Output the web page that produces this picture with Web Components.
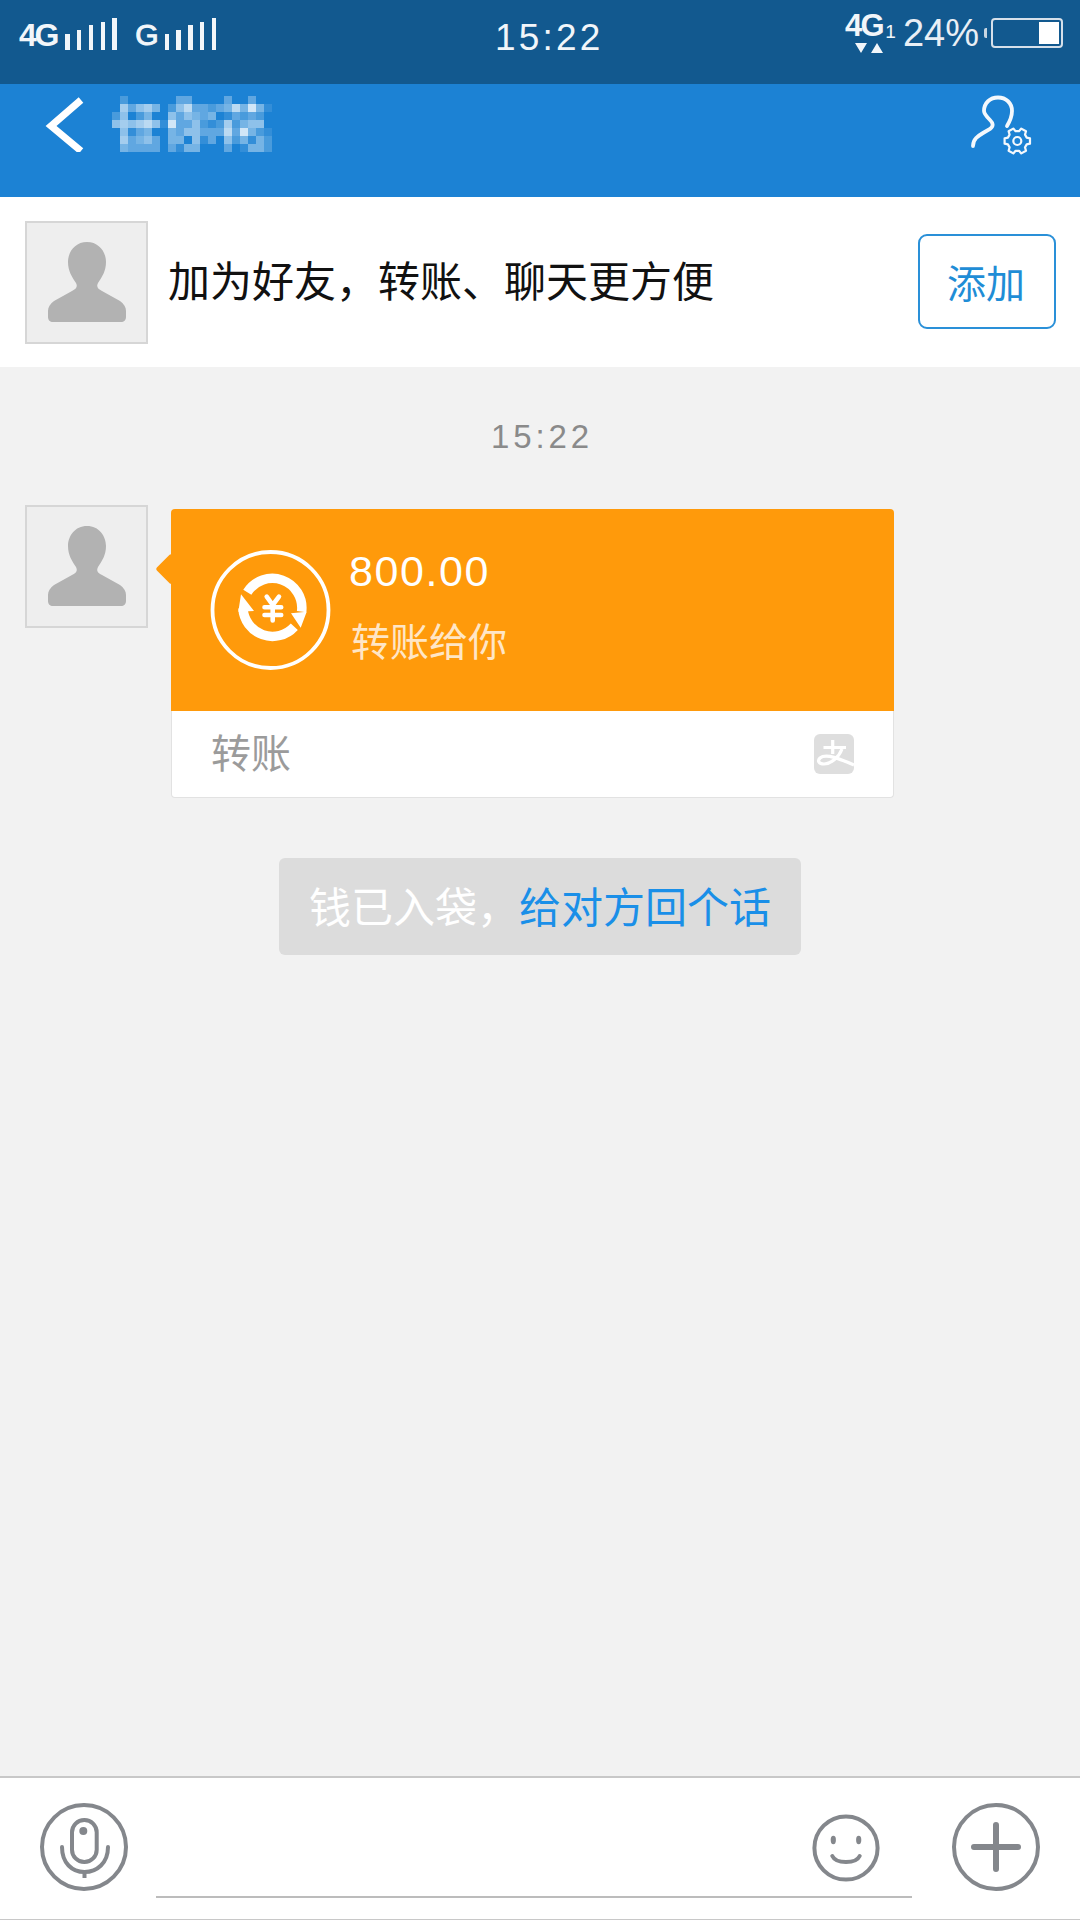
<!DOCTYPE html>
<html lang="zh-CN">
<head>
<meta charset="utf-8">
<title>转账</title>
<style>
    html, body { margin: 0; padding: 0; }
    body {
        width: 1080px;
        height: 1920px;
        display: flex;
        flex-direction: column;
        overflow: hidden;
        background: #f2f2f2;
        font-family: "Liberation Sans", "Noto Sans CJK SC", sans-serif;
    }
</style>
</head>
<body>
<status-bar></status-bar>
<nav-bar></nav-bar>
<friend-bar>加为好友，转账、聊天更方便</friend-bar>
<chat-view>
    <chat-time>15:22</chat-time>
    <chat-message>
        <transfer-card amount="800.00" note="转账给你" kind="转账"></transfer-card>
    </chat-message>
    <chat-hint>钱已入袋，<span slot="action">给对方回个话</span></chat-hint>
</chat-view>
<input-bar></input-bar>

<script>
class SignalBars extends HTMLElement {
    constructor() {
        super();
        this.attachShadow({ mode: 'open' }).innerHTML = `
            <style>
                :host { display: inline-flex; align-items: flex-end; gap: 7.5px; height: 32px; }
                span { display: block; width: 4.3px; background: #f2f6fa; }
            </style>
            <span style="height:16px"></span>
            <span style="height:20px"></span>
            <span style="height:25px"></span>
            <span style="height:28px"></span>
            <span style="height:32px"></span>
        `;
    }
}

class StatusBar extends HTMLElement {
    constructor() {
        super();
        this.attachShadow({ mode: 'open' }).innerHTML = `
            <style>
                :host {
                    display: grid;
                    grid-template-columns: 476px auto 1fr;
                    flex: none;
                    height: 84px;
                    box-sizing: border-box;
                    padding-left: 19px;
                    background: #12598f;
                    color: #f2f6fa;
                }
                .signal { display: flex; align-items: flex-end; height: 50px; }
                .net {
                    font-weight: bold;
                    font-size: 32px;
                    line-height: 30px;
                    letter-spacing: -2.2px;
                    margin-right: 8px;
                }
                .net.g { margin: 0 6px 0 18.5px; letter-spacing: 0; font-size: 30px; font-weight: normal; -webkit-text-stroke: 1px #f2f6fa; }
                .clock { font-size: 37px; line-height: 37px; letter-spacing: 3.2px; margin-top: 19px; }
                .right { display: flex; justify-content: flex-end; padding-right: 17px; }
                .net4g { position: relative; width: 40px; margin-right: 18px; height: 60px; }
                .net4g b { display: block; font-size: 31px; line-height: 24px; letter-spacing: -1.6px; margin-top: 14px; }
                .net4g i { position: absolute; right: -11px; top: 24px; font-style: normal; font-size: 19px; line-height: 15px; }
                .net4g svg { display: block; margin: 5px 0 0 10px; }
                .pct { font-size: 38px; line-height: 37px; margin-top: 15px; color: #e9eff5; }
                .nub { width: 3px; height: 10px; margin: 28px 4px 0 5px; background: #c8d6e2; border-radius: 2px 0 0 2px; }
                .battery {
                    width: 72px;
                    height: 30px;
                    margin-top: 18px;
                    box-sizing: border-box;
                    border: 2px solid #d6e0ea;
                    border-radius: 4px;
                    padding: 2px;
                    display: flex;
                    justify-content: flex-end;
                }
                .battery span { display: block; width: 20px; background: #fff; }
            </style>
            <div class="signal">
                <span class="net">4G</span><signal-bars></signal-bars>
                <span class="net g">G</span><signal-bars></signal-bars>
            </div>
            <div class="clock">15:22</div>
            <div class="right">
                <div class="net4g">
                    <b>4G</b><i>1</i>
                    <svg width="28" height="10" viewBox="0 0 28 10"><path d="M0 0H12L6 10ZM22 0L28 10H16Z" fill="#f2f6fa"/></svg>
                </div>
                <div class="pct">24%</div>
                <div class="nub"></div>
                <div class="battery"><span></span></div>
            </div>
        `;
    }
}

class PixelName extends HTMLElement {
    constructor() {
        super();
        // mosaic over the contact name, one digit = one 8px cell
        const rows = [
            '02000000330000300300',
            '06356402573323474841',
            '25024005354340132320',
            '56567518335212624550',
            '05134004355333738421',
            '06345304405130524142',
            '04333303144000301442'
        ];
        const cells = rows.map((row, y) => row.split('').map((v, x) =>
            `<rect x="${x * 8}" y="${y * 8}" width="8" height="8" fill="#fff" opacity="${v / 10}"/>`
        ).join('')).join('');
        this.attachShadow({ mode: 'open' }).innerHTML = `
            <style>
                :host { display: block; width: 160px; height: 56px; }
                svg { display: block; shape-rendering: crispEdges; }
            </style>
            <svg width="160" height="56" viewBox="0 0 160 56">${cells}</svg>
        `;
    }
}

class NavBar extends HTMLElement {
    constructor() {
        super();
        this.attachShadow({ mode: 'open' }).innerHTML = `
            <style>
                :host {
                    display: flex;
                    flex: none;
                    align-items: flex-start;
                    height: 113px;
                    box-sizing: border-box;
                    padding: 8px 45px 0 44px;
                    background: #1c82d4;
                }
                .back { display: block; margin: 4px 28px 0 0; }
                pixel-name { margin-top: 4px; }
                .profile { display: block; margin-left: auto; }
            </style>
            <svg class="back" width="40" height="56" viewBox="0 0 40 56">
                <path d="M37 4L7 30L37 55" fill="none" stroke="#fff" stroke-width="7"/>
            </svg>
            <pixel-name></pixel-name>
            <svg class="profile" width="65" height="66" viewBox="0 0 65 66" fill="none" stroke="#f4f8fc">
                <path stroke-width="3.8" stroke-linecap="round" d="M3 54C3 47 8 44 13 41L20 37C24 34 23 31 20 28C16 24 14 21 14 19C14 11 20 5.5 28 5.5C36 5.5 42 11 42 19C42 25 40 29 37 34"/>
                <path stroke-width="2.2" stroke-linejoin="round" d="${this.gearPath(47.3, 49)}"/>
                <circle cx="47.3" cy="49" r="4" stroke-width="2.2"/>
            </svg>
        `;
    }

    gearPath(cx, cy) {
        const pts = [];
        for (let i = 0; i < 6; i++) {
            const a = i * 60;
            [[a - 12, 13], [a + 12, 13], [a + 20, 10], [a + 40, 10]].forEach(([deg, r]) => {
                const rad = deg * Math.PI / 180;
                pts.push((cx + r * Math.cos(rad)).toFixed(1) + ' ' + (cy + r * Math.sin(rad)).toFixed(1));
            });
        }
        return 'M' + pts.join('L') + 'Z';
    }
}

class UserAvatar extends HTMLElement {
    constructor() {
        super();
        this.attachShadow({ mode: 'open' }).innerHTML = `
            <style>
                :host {
                    display: block;
                    flex: none;
                    width: 123px;
                    height: 123px;
                    box-sizing: border-box;
                    border: 2px solid #d6d6d6;
                    background: #eeeeee;
                }
                svg { display: block; margin: -2px; }
            </style>
            <svg width="123" height="123" viewBox="0 0 123 123">
                <path fill="#b2b2b2" d="M62 21C74 21 81 31 81 41C81 50 77 56 73 62C71 66 73 68 77 70L95 80C99 83 101 86 101 90L101 96C101 99 99 101 96 101L28 101C25 101 23 99 23 96L23 90C23 86 25 83 29 80L47 70C51 68 53 66 51 62C47 56 43 50 43 41C43 31 50 21 62 21Z"/>
            </svg>
        `;
    }
}

class FriendBar extends HTMLElement {
    constructor() {
        super();
        this.attachShadow({ mode: 'open' }).innerHTML = `
            <style>
                :host {
                    display: flex;
                    flex: none;
                    align-items: center;
                    height: 170px;
                    box-sizing: border-box;
                    padding: 0 24px 0 25px;
                    background: #fff;
                }
                user-avatar { margin-top: 1px; }
                .text { flex: 1; margin-left: 20px; font-size: 42px; line-height: 60px; color: #111; margin-top: 1px; }
                button {
                    width: 138px;
                    height: 95px;
                    margin-top: -2px;
                    box-sizing: border-box;
                    border: 2px solid #2a90d8;
                    border-radius: 9px;
                    background: #fff;
                    color: #1f8dd6;
                    font: inherit;
                    font-size: 39px;
                    padding: 0 2px 0 0;
                }
            </style>
            <user-avatar></user-avatar>
            <div class="text"><slot></slot></div>
            <button>添加</button>
        `;
    }
}

class ChatView extends HTMLElement {
    constructor() {
        super();
        this.attachShadow({ mode: 'open' }).innerHTML = `
            <style>
                :host {
                    display: flex;
                    flex: 1;
                    flex-direction: column;
                    box-sizing: border-box;
                    padding-top: 50px;
                    background: #f2f2f2;
                }
            </style>
            <slot></slot>
        `;
    }
}

class ChatTime extends HTMLElement {
    constructor() {
        super();
        this.attachShadow({ mode: 'open' }).innerHTML = `
            <style>
                :host {
                    display: block;
                    height: 40px;
                    padding-left: 4px;
                    text-align: center;
                    font-size: 33px;
                    line-height: 40px;
                    letter-spacing: 3.9px;
                    color: #8a8a8a;
                }
            </style>
            <slot></slot>
        `;
    }
}

class ChatMessage extends HTMLElement {
    constructor() {
        super();
        this.attachShadow({ mode: 'open' }).innerHTML = `
            <style>
                :host { display: flex; gap: 23px; margin-top: 48px; padding-left: 25px; }
                .bubble { margin-top: 4px; }
            </style>
            <user-avatar></user-avatar>
            <div class="bubble"><slot></slot></div>
        `;
    }
}

class TransferCard extends HTMLElement {
    constructor() {
        super();
        this.attachShadow({ mode: 'open' }).innerHTML = `
            <style>
                :host { display: block; position: relative; width: 723px; }
                :host::before {
                    content: "";
                    position: absolute;
                    left: -11px;
                    top: 49px;
                    width: 22px;
                    height: 22px;
                    background: #ff9a0b;
                    border-radius: 2px;
                    transform: rotate(45deg);
                }
                .top {
                    position: relative;
                    display: flex;
                    height: 202px;
                    box-sizing: border-box;
                    padding: 39px 0 0 38px;
                    background: #ff9a0b;
                    border-radius: 4px 4px 0 0;
                }
                .top svg { display: block; flex: none; }
                .info { margin-left: 16px; }
                .amount { font-size: 43px; line-height: 50px; letter-spacing: 1.6px; color: #fff; margin-top: -2px; }
                .note { font-size: 39px; line-height: 50px; color: #ffe6c6; margin: 22px 0 0 2px; }
                .bottom {
                    display: flex;
                    align-items: center;
                    justify-content: space-between;
                    height: 87px;
                    box-sizing: border-box;
                    padding: 0 39px 0 39px;
                    background: #fff;
                    border: 1px solid #e2e2e2;
                    border-top: 0;
                    border-radius: 0 0 4px 4px;
                    color: #9b9b9b;
                    font-size: 40px;
                }
                .bottom span { margin-top: -6px; }
                .bottom svg { display: block; margin-top: 0; }
            </style>
            <div class="top">
                <svg width="124" height="124" viewBox="0 0 124 124" fill="none" stroke="#fff">
                    <circle cx="61.5" cy="62" r="58" stroke-width="3.8"/>
                    <path stroke-width="9.5" d="M38.3 44.3A29.5 29.5 0 0 1 92.6 63.7"/>
                    <path stroke-width="9.5" d="M85.3 78.7A29.5 29.5 0 0 1 34 60.3"/>
                    <path fill="#fff" stroke="none" d="M91.7 79.7L82 65.3L97.7 63.7ZM32 46.3L29.3 63.7L45 63Z"/>
                    <path stroke-width="4.6" stroke-linecap="round" stroke-linejoin="round" d="M57.7 48.7L63.7 57L70 48.7M55.5 59.3H72.2M55.5 67H72.2M63.7 57V72.5"/>
                </svg>
                <div class="info">
                    <div class="amount">${this.getAttribute('amount')}</div>
                    <div class="note">${this.getAttribute('note')}</div>
                </div>
            </div>
            <div class="bottom">
                <span>${this.getAttribute('kind')}</span>
                <svg width="40" height="40" viewBox="0 0 40 40">
                    <rect width="40" height="40" rx="6" fill="#dedede"/>
                    <path fill="none" stroke="#fff" stroke-width="3.2" d="M18.7 6V20M9.5 13.5H32M28 15C25 23 17 30 10 30C5 30 3 27 6 24C12 19 26 25 40 31"/>
                </svg>
            </div>
        `;
    }
}

class ChatHint extends HTMLElement {
    constructor() {
        super();
        this.attachShadow({ mode: 'open' }).innerHTML = `
            <style>
                :host { display: flex; justify-content: center; margin-top: 60px; }
                .pill {
                    display: flex;
                    align-items: center;
                    height: 97px;
                    box-sizing: border-box;
                    padding: 0 30px 4px;
                    background: #dcdcdc;
                    border-radius: 6px;
                    color: #fff;
                    font-size: 42px;
                }
                .action { color: #1a8fe8; }
            </style>
            <div class="pill"><slot></slot><span class="action"><slot name="action"></slot></span></div>
        `;
    }
}

class InputBar extends HTMLElement {
    constructor() {
        super();
        this.attachShadow({ mode: 'open' }).innerHTML = `
            <style>
                :host {
                    display: flex;
                    flex: none;
                    align-items: center;
                    height: 144px;
                    box-sizing: border-box;
                    padding: 0 38px;
                    background: #fff;
                    border-top: 2px solid #c8c8c8;
                    border-bottom: 1px solid #c8c8c8;
                }
                svg { display: block; flex: none; }
                .round { margin-top: -3px; }
                .field {
                    flex: 1;
                    align-self: stretch;
                    display: flex;
                    align-items: center;
                    justify-content: flex-end;
                    box-sizing: border-box;
                    margin: 0 38px 21px 26px;
                    padding: 22px 32px 0 0;
                    border-bottom: 2px solid #bcbcbc;
                }
            </style>
            <svg class="round" width="92" height="92" viewBox="0 0 92 92" fill="none" stroke="#84878c">
                <circle cx="46" cy="46" r="42" stroke-width="4"/>
                <rect x="34" y="19" width="24.7" height="42" rx="12.3" stroke-width="4"/>
                <circle cx="45.3" cy="30" r="4" fill="#84878c" stroke="none"/>
                <path stroke-width="4" stroke-linecap="round" d="M24 46C24 62 34 71 46.5 71C59 71 70 62 70 46"/>
                <path stroke-width="4" d="M46.5 71V77"/>
            </svg>
            <div class="field">
                <svg width="68" height="68" viewBox="0 0 68 68" fill="none" stroke="#84878c">
                    <circle cx="34" cy="34" r="31.6" stroke-width="4"/>
                    <ellipse cx="21.3" cy="26" rx="2.6" ry="4.2" fill="#84878c" stroke="none"/>
                    <ellipse cx="46.7" cy="26" rx="2.6" ry="4.2" fill="#84878c" stroke="none"/>
                    <path stroke-width="4" stroke-linecap="round" d="M20.3 42C24 50 44 50 47.7 42"/>
                </svg>
            </div>
            <svg class="round" width="92" height="92" viewBox="0 0 92 92" fill="none" stroke="#84878c" stroke-linecap="round">
                <circle cx="46" cy="46" r="42" stroke-width="4"/>
                <path stroke-width="6" d="M46 24V68M24 46H68"/>
            </svg>
        `;
    }
}

customElements.define('signal-bars', SignalBars);
customElements.define('status-bar', StatusBar);
customElements.define('pixel-name', PixelName);
customElements.define('nav-bar', NavBar);
customElements.define('user-avatar', UserAvatar);
customElements.define('friend-bar', FriendBar);
customElements.define('chat-view', ChatView);
customElements.define('chat-time', ChatTime);
customElements.define('chat-message', ChatMessage);
customElements.define('transfer-card', TransferCard);
customElements.define('chat-hint', ChatHint);
customElements.define('input-bar', InputBar);
</script>
</body>
</html>
